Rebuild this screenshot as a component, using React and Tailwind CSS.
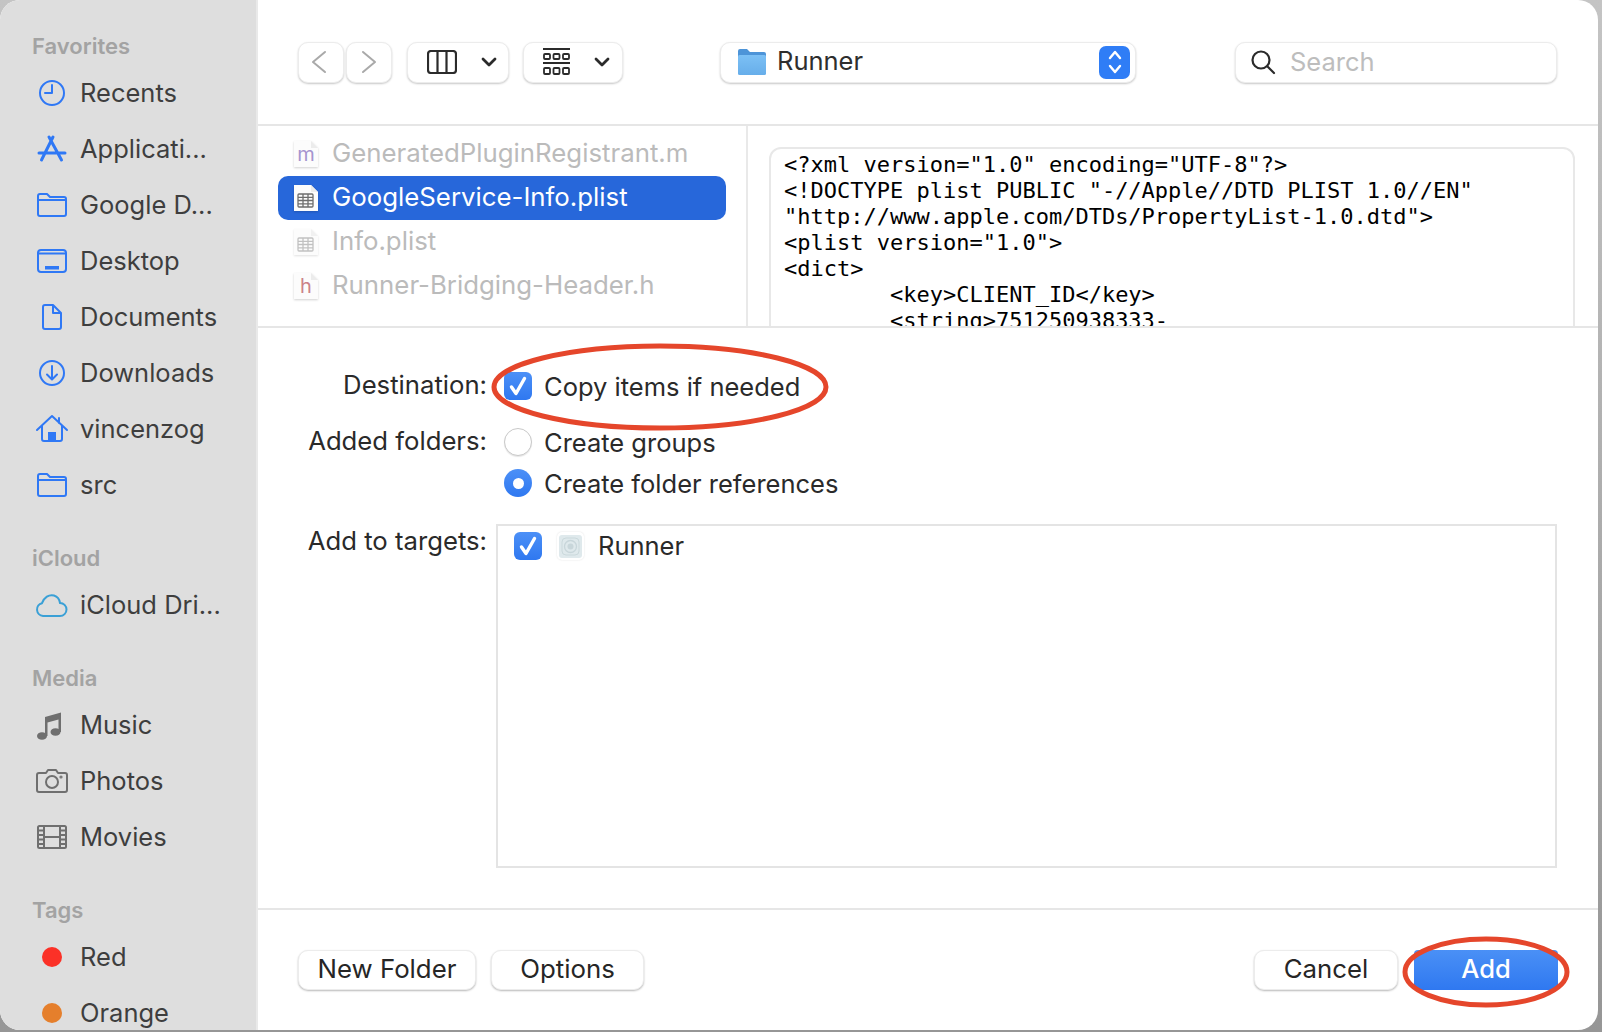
const font = { fontFamily: 'Inter, "Noto Sans", sans-serif' }

const BLUE = '#2f78f5'
const GRAY = '#6f6f6f'

function Icon({ color = BLUE, children }) {
  return (
    <svg width="38" height="38" viewBox="0 0 38 38" fill="none" stroke={color} strokeWidth="2" strokeLinecap="round" strokeLinejoin="round">
      {children}
    </svg>
  )
}

const Folder = () => (
  <Icon>
    <path d="M5 10a2 2 0 0 1 2-2h7l3 3h14a2 2 0 0 1 2 2v15a2 2 0 0 1-2 2H7a2 2 0 0 1-2-2Z M5 14H33" />
  </Icon>
)

const sidebarIcons = {
  recents: (
    <Icon>
      <circle cx="19" cy="19" r="12" />
      <path d="M19 11v8h-7" />
    </Icon>
  ),
  apps: (
    <Icon>
      <g strokeWidth="3">
        <path d="M16 7 28.500 30M20 7 8.500 30M6 23H32" />
      </g>
    </Icon>
  ),
  folder: <Folder />,
  desktop: (
    <Icon>
      <rect x="5" y="8" width="28" height="22" rx="3" />
      <path d="M5 11.500H33" />
      <rect x="12" y="24" width="14" height="3.500" fill={BLUE} stroke="none" />
    </Icon>
  ),
  documents: (
    <Icon>
      <path d="M12 7h8l8 8v14a2 2 0 0 1-2 2H12a2 2 0 0 1-2-2V9a2 2 0 0 1 2-2Z M20 7v8h8" />
    </Icon>
  ),
  downloads: (
    <Icon>
      <circle cx="19" cy="19" r="12" />
      <path d="M19 12v13M14 20.500l5 5 5-5" />
    </Icon>
  ),
  home: (
    <Icon>
      <path d="M4 20 19 6l15 14M26 8v5M9 16v13a2 2 0 0 0 2 2h16a2 2 0 0 0 2-2V16" />
      <rect x="15" y="22" width="8" height="9" fill={BLUE} stroke="none" />
    </Icon>
  ),
  cloud: (
    <Icon color="#3aa0d6">
      <path d="M10 30a6.500 6.500 0 0 1-1-12.800C11 11.500 16 8 21 9.500c3.500 1 5.500 4 6 7.500a6.500 6.500 0 0 1 0 13Z" />
    </Icon>
  ),
  music: (
    <svg width="38" height="38" viewBox="0 0 38 38" fill={GRAY}>
      <path d="M12 11 28 6.500V26h-2.500V13.500L14.500 16.500V30H12Z" />
      <ellipse cx="9" cy="30" rx="5" ry="3.800" />
      <ellipse cx="22.500" cy="26" rx="5" ry="3.800" />
    </svg>
  ),
  photos: (
    <Icon color={GRAY}>
      <path d="M6 11h7l2-3h8l2 3h7a2 2 0 0 1 2 2v15a2 2 0 0 1-2 2H6a2 2 0 0 1-2-2V13a2 2 0 0 1 2-2Z" />
      <circle cx="19" cy="20" r="6" />
      <circle cx="28" cy="15" r="0.600" />
    </Icon>
  ),
  movies: (
    <Icon color={GRAY}>
      <rect x="5" y="8" width="28" height="22" rx="1.500" />
      <path d="M11 8v22M27 8v22M11 19h16M5 12.500h6M5 17h6M5 21.500h6M5 26h6M27 12.500h6M27 17h6M27 21.500h6M27 26h6" />
    </Icon>
  ),
}

function SidebarRow({ icon, dot, label }) {
  return (
    <div className="flex items-center h-[56px] pl-[33px]">
      <div className="w-[38px] h-[38px] flex items-center justify-center shrink-0">
        {dot ? <div className={`w-[20px] h-[20px] rounded-full ${dot}`} /> : sidebarIcons[icon]}
      </div>
      <span className="ml-[9px] text-[25.500px] leading-none text-[#3e3e3e] whitespace-nowrap">{label}</span>
    </div>
  )
}

function SidebarSection({ title, first, children }) {
  return (
    <div className={first ? 'mt-[31px]' : 'mt-[30px]'}>
      <div className="h-[30px] mb-[4px] pl-[32px] flex items-center text-[22px] font-semibold text-[#a3a3a3]">{title}</div>
      {children}
    </div>
  )
}

function Sidebar() {
  return (
    <aside className="w-[258px] shrink-0 h-full bg-[#dedede] border-r-2 border-[#e9e9e9] overflow-hidden">
      <SidebarSection title="Favorites" first>
        <SidebarRow icon="recents" label="Recents" />
        <SidebarRow icon="apps" label="Applicati..." />
        <SidebarRow icon="folder" label="Google D..." />
        <SidebarRow icon="desktop" label="Desktop" />
        <SidebarRow icon="documents" label="Documents" />
        <SidebarRow icon="downloads" label="Downloads" />
        <SidebarRow icon="home" label="vincenzog" />
        <SidebarRow icon="folder" label="src" />
      </SidebarSection>
      <SidebarSection title="iCloud">
        <SidebarRow icon="cloud" label="iCloud Dri..." />
      </SidebarSection>
      <SidebarSection title="Media">
        <SidebarRow icon="music" label="Music" />
        <SidebarRow icon="photos" label="Photos" />
        <SidebarRow icon="movies" label="Movies" />
      </SidebarSection>
      <SidebarSection title="Tags">
        <SidebarRow dot="bg-[#fb3127]" label="Red" />
        <SidebarRow dot="bg-[#e57f2c]" label="Orange" />
      </SidebarSection>
    </aside>
  )
}

const toolButton = 'h-[41px] rounded-[10px] bg-white border border-[#ececec] shadow-[0_1px_2px_rgba(0,0,0,0.22)] flex items-center shrink-0'

const Chevron = () => (
  <svg width="16" height="10" viewBox="0 0 16 10" fill="none" stroke="#2b2b2b" strokeWidth="2.800" strokeLinecap="round" strokeLinejoin="round">
    <path d="M2 2l6 6 6-6" />
  </svg>
)

function Toolbar() {
  return (
    <div className="h-[126px] shrink-0 flex items-center pl-[40px] border-b-2 border-[#e6e6e6]">
      <div className={`${toolButton} w-[46px] justify-center`}>
        <svg className="-ml-[5px]" width="16" height="24" viewBox="0 0 16 24" fill="none" stroke="#a9a9a9" strokeWidth="2" strokeLinecap="round" strokeLinejoin="round">
          <path d="M14 2 2 12l12 10" />
        </svg>
      </div>
      <div className={`${toolButton} w-[46px] justify-center ml-[2px]`}>
        <svg width="16" height="24" viewBox="0 0 16 24" fill="none" stroke="#a9a9a9" strokeWidth="2" strokeLinecap="round" strokeLinejoin="round">
          <path d="M2 2l12 10L2 22" />
        </svg>
      </div>
      <div className={`${toolButton} w-[102px] ml-[15px] pl-[19px]`}>
        <svg width="30" height="24" viewBox="0 0 30 24" fill="none" stroke="#2b2b2b" strokeWidth="2.200">
          <rect x="1" y="1" width="28" height="22" rx="3" />
          <path d="M10.500 1v22M19.500 1v22" />
        </svg>
        <div className="ml-[24px]"><Chevron /></div>
      </div>
      <div className={`${toolButton} w-[100px] ml-[14px] pl-[19px]`}>
        <svg width="27" height="28" viewBox="0 0 27 28" fill="none" stroke="#2b2b2b" strokeWidth="1.800">
          <path d="M0 1h27M0 15h27" />
          <rect x="1" y="6" width="6" height="5" rx="1" />
          <rect x="10.500" y="6" width="6" height="5" rx="1" />
          <rect x="20" y="6" width="6" height="5" rx="1" />
          <rect x="1" y="20" width="6" height="6" rx="1" />
          <rect x="10.500" y="20" width="6" height="6" rx="1" />
          <rect x="20" y="20" width="6" height="6" rx="1" />
        </svg>
        <div className="ml-[24px]"><Chevron /></div>
      </div>
      <div className={`${toolButton} w-[416px] ml-[97px] pl-[16px] pr-[5px]`}>
        <svg width="30" height="28" viewBox="0 0 30 28">
          <defs>
            <linearGradient id="folderFill" x1="0" y1="0" x2="0" y2="1">
              <stop offset="0" stopColor="#7cc0f5" />
              <stop offset="1" stopColor="#67aeea" />
            </linearGradient>
          </defs>
          <path d="M1 3a2 2 0 0 1 2-2h7l3 3h14a2 2 0 0 1 2 2v3H1Z" fill="#4d94d8" />
          <rect x="1" y="7" width="28" height="20" rx="1.500" fill="url(#folderFill)" />
        </svg>
        <span className="ml-[10px] pb-[2px] text-[25.500px] leading-none text-[#2e2e2e]">Runner</span>
        <div className="ml-auto w-[31px] h-[33px] rounded-[7px] bg-[#2f7df6] flex items-center justify-center">
          <svg width="16" height="26" viewBox="0 0 16 26" fill="none" stroke="white" strokeWidth="2.400" strokeLinecap="round" strokeLinejoin="round">
            <path d="M3 9l5-6 5 6M3 17l5 6 5-6" />
          </svg>
        </div>
      </div>
      <div className={`${toolButton} w-[322px] ml-[99px] pl-[14px]`}>
        <svg width="26" height="26" viewBox="0 0 26 26" fill="none" stroke="#2b2b2b" strokeWidth="2.200" strokeLinecap="round">
          <circle cx="11" cy="11" r="8.500" />
          <path d="M17.500 17.500 24 24" />
        </svg>
        <span className="ml-[14px] text-[25.500px] leading-none text-[#bdbdbd]">Search</span>
      </div>
    </div>
  )
}

function FileIcon({ letter, letterColor, plist, selected, faded }) {
  const grid = selected ? '#6e6e6e' : '#a8a8a8'
  return (
    <div className="relative w-[26px] h-[28px] shrink-0">
      <svg width="26" height="28" viewBox="0 0 26 28" className={`drop-shadow-[0_1px_1px_rgba(0,0,0,0.18)] ${faded ? 'opacity-70' : ''}`}>
        <path d="M1 1h17l7 7v19H1Z" fill="#fcfcfc" />
        <path d="M18 1v7h7Z" fill="#ececec" />
        {plist && (
          <g fill="none" stroke={grid} strokeWidth="1.300">
            <rect x="5" y="10" width="15" height="13" rx="1" />
            <path d="M5 13.300h15M5 16.500h15M5 19.800h15M10 10v13M15 10v13" />
          </g>
        )}
      </svg>
      {letter && (
        <span className="absolute inset-0 flex items-center justify-center text-[20px] leading-none" style={{ color: letterColor }}>
          {letter}
        </span>
      )}
    </div>
  )
}

function FileRow({ label, selected, children }) {
  return (
    <div className={`h-[44px] w-[448px] flex items-center pl-[15px] rounded-[10px] ${selected ? 'bg-[#2767da]' : ''}`}>
      {children}
      <span className={`ml-[13px] pb-[2px] text-[25.800px] leading-none whitespace-nowrap ${selected ? 'text-white' : 'text-[#bbbbbb]'}`}>{label}</span>
    </div>
  )
}

const plistText = `<?xml version="1.0" encoding="UTF-8"?>
<!DOCTYPE plist PUBLIC "-//Apple//DTD PLIST 1.0//EN"
"http://www.apple.com/DTDs/PropertyList-1.0.dtd">
<plist version="1.0">
<dict>
        <key>CLIENT_ID</key>
        <string>751250938333-`

function Browser() {
  return (
    <div className="h-[202px] shrink-0 flex border-b-2 border-[#e6e6e6] overflow-hidden">
      <div className="w-[490px] shrink-0 border-r-2 border-[#e9e9e9] pt-[6px] pl-[20px]">
        <FileRow label="GeneratedPluginRegistrant.m"><FileIcon letter="m" letterColor="#a594cf" /></FileRow>
        <FileRow label="GoogleService-Info.plist" selected><FileIcon plist selected /></FileRow>
        <FileRow label="Info.plist"><FileIcon plist faded /></FileRow>
        <FileRow label="Runner-Bridging-Header.h"><FileIcon letter="h" letterColor="#cb8288" /></FileRow>
      </div>
      <div className="flex-1 pt-[21px] pl-[21px] pr-[23px]">
        <div className="h-[240px] rounded-t-[12px] border-2 border-[#e8e8e8] pl-[13px] pt-[3px]">
          <pre className="text-[22px] leading-[26px] text-black" style={{ fontFamily: '"DejaVu Sans Mono", "Liberation Mono", monospace' }}>{plistText}</pre>
        </div>
      </div>
    </div>
  )
}

const Check = () => (
  <div className="w-[28px] h-[28px] rounded-[6px] bg-gradient-to-b from-[#4c90f7] to-[#2f78f0] flex items-center justify-center shrink-0">
    <svg width="20" height="20" viewBox="0 0 20 20" fill="none" stroke="white" strokeWidth="3.400" strokeLinecap="round" strokeLinejoin="round">
      <path d="M3.500 11l4.500 6.500 8.500-15" />
    </svg>
  </div>
)

function Label({ children }) {
  return <div className="w-[229px] shrink-0 pb-[2px] text-right text-[25.700px] leading-none text-[#2a2a2a]">{children}</div>
}

function Form() {
  return (
    <div className="h-[582px] shrink-0 pt-[38px] border-b-2 border-[#e6e6e6]">
      <div className="flex items-center h-[40px]">
        <Label>Destination:</Label>
        <div className="ml-[17px]"><Check /></div>
        <span className="ml-[12px] pt-[2px] text-[25.500px] leading-none text-[#2a2a2a]">Copy items if needed</span>
      </div>
      <div className="flex items-center h-[40px] mt-[16px]">
        <Label>Added folders:</Label>
        <div className="ml-[17px] w-[28px] h-[28px] rounded-full bg-white border border-[#c9c9c9] shadow-[0_1px_1px_rgba(0,0,0,0.1)]" />
        <span className="ml-[12px] pt-[2px] text-[25.500px] leading-none text-[#2a2a2a]">Create groups</span>
      </div>
      <div className="flex items-center h-[40px] mt-[1px]">
        <div className="w-[229px] shrink-0" />
        <div className="ml-[17px] w-[28px] h-[28px] rounded-full bg-gradient-to-b from-[#4c90f7] to-[#2f78f0] flex items-center justify-center">
          <div className="w-[11px] h-[11px] rounded-full bg-white" />
        </div>
        <span className="ml-[12px] pt-[2px] text-[25.500px] leading-none text-[#2a2a2a]">Create folder references</span>
      </div>
      <div className="flex mt-[21px]">
        <div className="h-[36px] flex items-center"><Label>Add to targets:</Label></div>
        <div className="ml-[9px] w-[1061px] h-[344px] border-2 border-[#e4e4e4] pt-[6px] pl-[16px]">
          <div className="flex items-center h-[28px]">
            <Check />
            <div className="ml-[15px] w-[27px] h-[28px] rounded-[5px] bg-white shadow-[0_0_2px_rgba(0,0,0,0.12)] flex items-center justify-center shrink-0">
              <svg width="23" height="23" viewBox="0 0 23 23">
                <rect width="23" height="23" rx="3" fill="#dfe9ec" />
                <rect x="3" y="3" width="17" height="17" rx="4" fill="none" stroke="#cbd9dc" strokeWidth="1" />
                <circle cx="11.500" cy="11.500" r="6" fill="none" stroke="#c8d6da" strokeWidth="1.300" />
                <circle cx="11.500" cy="11.500" r="3" fill="#c8d6da" />
              </svg>
            </div>
            <span className="ml-[14px] pb-[1px] text-[25.500px] leading-none text-[#2a2a2a]">Runner</span>
          </div>
        </div>
      </div>
    </div>
  )
}

function Button({ className, children }) {
  return (
    <div className={`h-[40px] pb-[2px] rounded-[10px] bg-white border border-[#ececec] shadow-[0_1px_2px_rgba(0,0,0,0.28)] flex items-center justify-center text-[25.800px] leading-none text-[#262626] ${className}`}>
      {children}
    </div>
  )
}

function Footer() {
  return (
    <div className="flex-1 flex items-center pl-[40px] pr-[40px]">
      <Button className="w-[178px]">New Folder</Button>
      <Button className="w-[153px] ml-[15px]">Options</Button>
      <Button className="w-[144px] ml-auto">Cancel</Button>
      <div className="w-[144px] h-[40px] pb-[2px] ml-[16px] rounded-[4px] bg-gradient-to-b from-[#4a90f6] to-[#2f78f0] flex items-center justify-center text-[25.500px] leading-none font-medium text-white">
        Add
      </div>
    </div>
  )
}

export default function App() {
  return (
    <div className="w-[1602px] h-[1032px] bg-gradient-to-b from-[#c4c4c4] to-[#969696] overflow-hidden" style={font}>
      <div className="relative w-[1598px] h-[1030px] rounded-[20px] bg-white overflow-hidden flex">
        <Sidebar />
        <main className="flex-1 flex flex-col min-w-0">
          <Toolbar />
          <Browser />
          <Form />
          <Footer />
        </main>
        {/* red annotation rings drawn over the dialog */}
        <svg className="absolute inset-0 pointer-events-none" width="1598" height="1030" fill="none" stroke="#e5462b" strokeWidth="5">
          <ellipse cx="660" cy="387" rx="166" ry="41" />
          <ellipse cx="1486" cy="972" rx="81" ry="33" />
        </svg>
      </div>
    </div>
  )
}
